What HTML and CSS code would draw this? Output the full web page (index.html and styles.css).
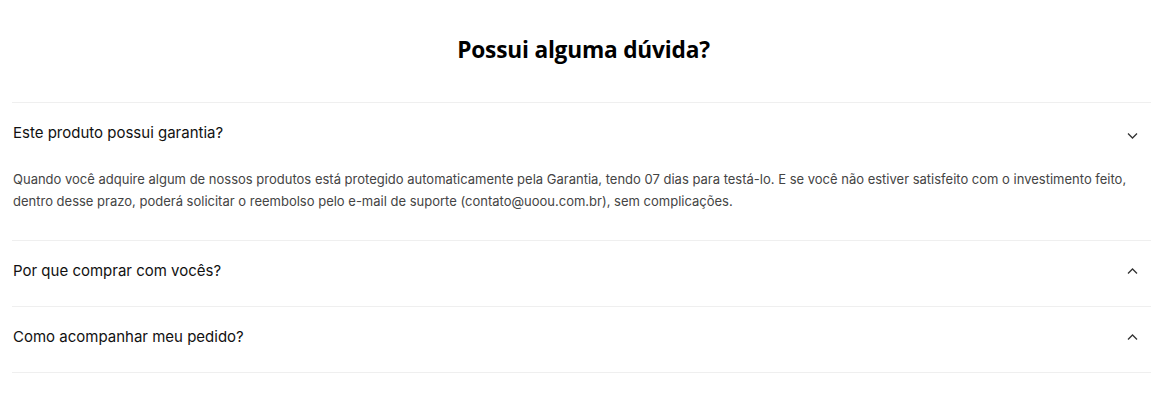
FILE: index.html
```html
<!DOCTYPE html>
<html lang="pt-BR">
<head>
<meta charset="utf-8">
<link rel="stylesheet" href="styles.css">
</head>
<body>
<section class="faq">
  <h2 class="faq-title">Possui alguma dúvida?</h2>
  <div class="faq-list">
    <div class="faq-item open">
      <div class="faq-q">
        <span class="faq-q-text">Este produto possui garantia?</span>
        <svg class="chev chev-down" viewBox="0 0 11 7" width="11" height="7"><path d="M1 1.5l4.5 4.5 4.5-4.5" fill="none" stroke="#333" stroke-width="1.3"/></svg>
      </div>
      <div class="faq-a">Quando você adquire algum de nossos produtos está protegido automaticamente pela Garantia, tendo 07 dias para testá-lo. E se você não estiver satisfeito com o investimento feito, dentro desse prazo, poderá solicitar o reembolso pelo e-mail de suporte (contato@uoou.com.br), sem complicações.</div>
    </div>
    <div class="faq-item">
      <div class="faq-q">
        <span class="faq-q-text">Por que comprar com vocês?</span>
        <svg class="chev chev-up" viewBox="0 0 11 7" width="11" height="7"><path d="M1 5.5l4.5-4.5 4.5 4.5" fill="none" stroke="#333" stroke-width="1.3"/></svg>
      </div>
    </div>
    <div class="faq-item">
      <div class="faq-q">
        <span class="faq-q-text">Como acompanhar meu pedido?</span>
        <svg class="chev chev-up" viewBox="0 0 11 7" width="11" height="7"><path d="M1 5.5l4.5-4.5 4.5 4.5" fill="none" stroke="#333" stroke-width="1.3"/></svg>
      </div>
    </div>
  </div>
</section>
</body>
</html>
```
FILE: styles.css
```css
html, body { margin: 0; padding: 0; background: #fff; }
body { font-family: Inter, "Noto Sans", sans-serif; color: #111; }
.faq { padding: 0 12px 0 12px; }
.faq-title {
  margin: 0;
  height: 98px;
  padding-bottom: 4px;
  display: flex;
  align-items: center;
  justify-content: center;
  padding-left: 4px;
  font-family: "Open Sans", sans-serif;
  font-size: 22.7px;
  font-weight: 700;
  color: #000;
  letter-spacing: -0.2px;
}
.faq-list { border-top: 1px solid #efefef; }
.faq-item { border-bottom: 1px solid #efefef; }
.faq-q {
  display: flex;
  align-items: flex-start;
  justify-content: space-between;
  padding: 21px 13px 26px 1px;
  font-size: 15px;
  line-height: 18px;
  color: #111;
}
.chev { display: block; flex: none; }
.chev-down { margin-top: 8px; }
.chev-up { margin-top: 6px; }
.faq-a {
  font-size: 13px;
  line-height: 22px;
  color: #444;
  padding: 0 0 28px 1px;
}
```
